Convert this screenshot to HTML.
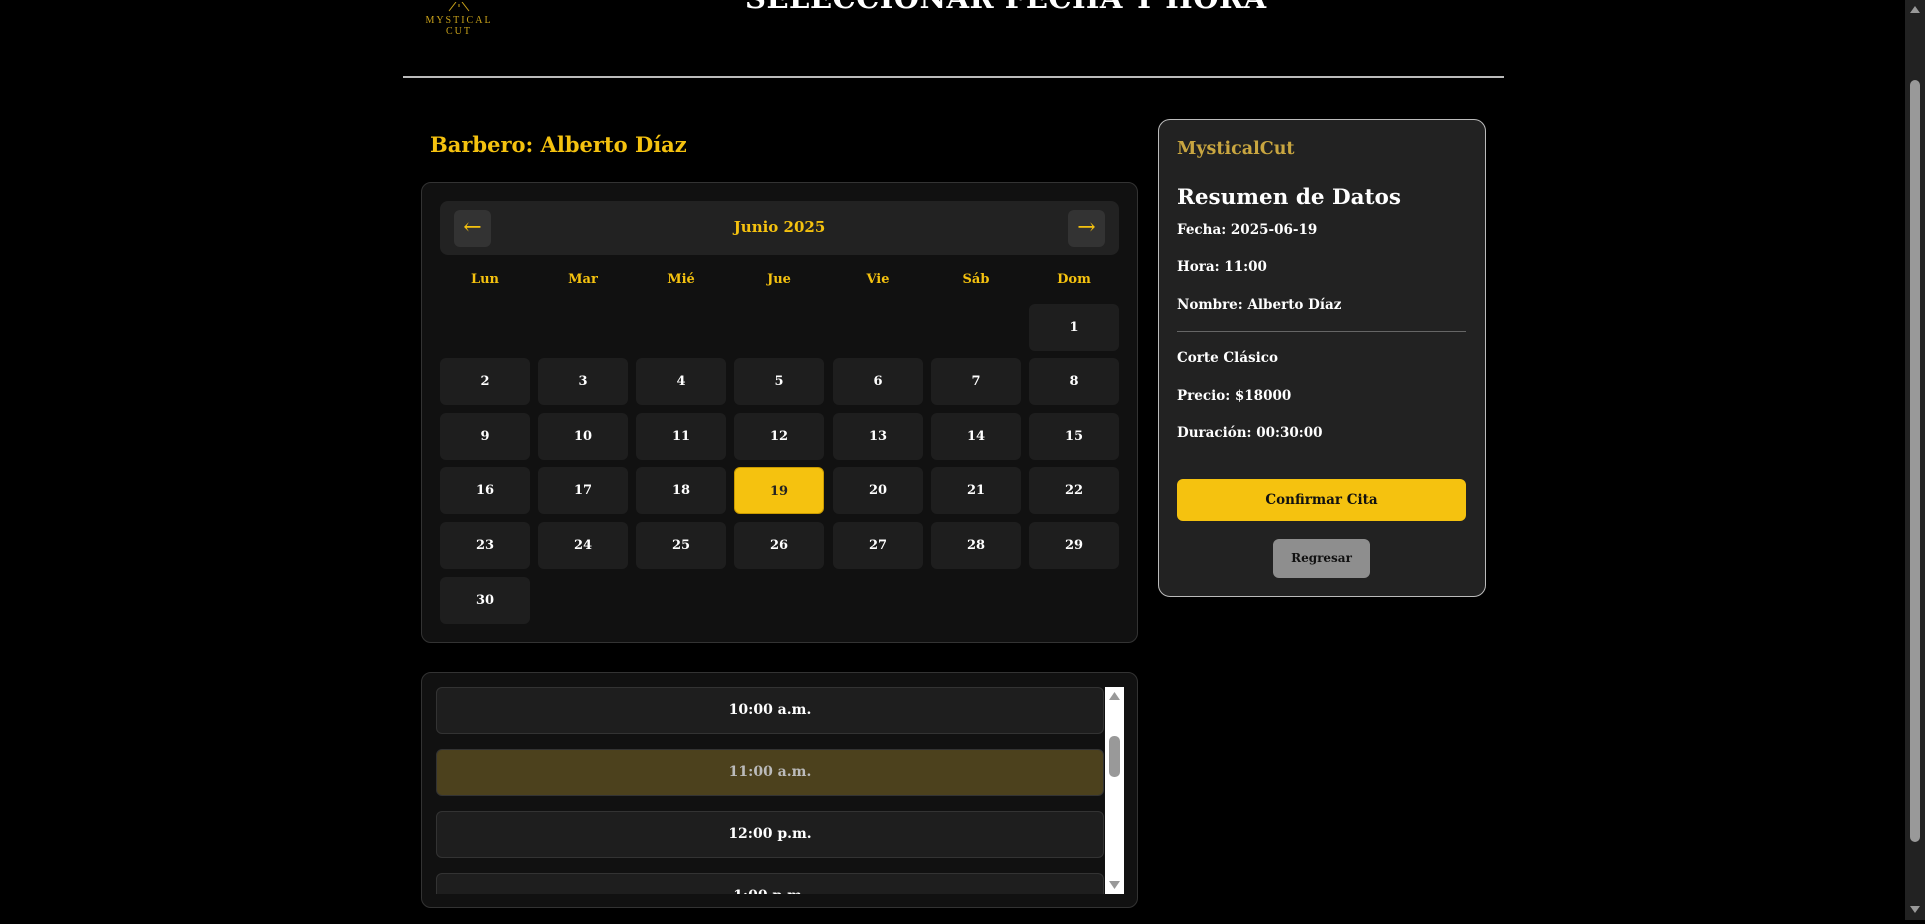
<!DOCTYPE html>
<html><head><meta charset="utf-8"><style>
*{box-sizing:border-box;margin:0;padding:0}
body{width:1925px;height:920px;background:#000;overflow:hidden;position:relative;font-family:"DejaVu Serif","Liberation Serif",serif;font-weight:bold;color:#fff}
.a{position:absolute}
.title{left:745px;top:-19px;width:420px;text-align:center;font-size:29px;letter-spacing:0.5px;white-space:nowrap}
.logo{left:420px;top:2px;width:78px;text-align:center;color:#c9a21a;font-family:"Liberation Serif",serif;font-weight:normal;font-size:10px;letter-spacing:2px;line-height:11px}
.hr{left:403px;top:76px;width:1101px;height:2px;background:#bbb}
.barb{left:430px;top:132px;font-size:21px;color:#f5c20f}
.cal{left:421px;top:182px;width:717px;height:461px;background:#111;border:1px solid #333;border-radius:10px}
.head{left:440px;top:201px;width:679px;height:54px;background:#222;border-radius:8px}
.arr{top:210px;width:37px;height:37px;background:#333;border-radius:6px;color:#f5c20f;font-size:22px;text-align:center;line-height:35px;font-weight:normal}
.month{left:440px;top:218px;width:679px;text-align:center;color:#f5c20f;font-size:15px}
.dn{top:272px;width:90px;text-align:center;color:#f5c20f;font-size:13px}
.c{width:90px;height:47px;background:#1e1e1e;border-radius:6px;text-align:center;line-height:47px;font-size:13px}
.sel{background:#f5c20f;color:#222;border:1px solid #c99a00}
.tb{left:421px;top:672px;width:717px;height:236px;background:#111;border:1px solid #333;border-radius:10px;overflow:hidden}
.s{left:436px;width:668px;height:47px;background:#1e1e1e;border:1px solid #333;border-radius:6px;text-align:center;line-height:45px;font-size:14px}
.sb{left:1105px;top:687px;width:19px;height:207px;background:#fff}
.p{left:1158px;top:119px;width:328px;height:478px;background:#222;border:1px solid #bbb;border-radius:12px}
.t{left:1177px;font-size:13.5px;white-space:nowrap}
</style></head><body>
<div class="a logo"><svg width="40" height="10" viewBox="0 0 40 10"><path d="M10 9 L17 0 M30 9 L23 0 M20 2 V5" stroke="#c9a21a" stroke-width="1"/></svg><br>MYSTICAL<br>CUT</div>
<div class="a title">SELECCIONAR FECHA Y HORA</div>
<div class="a hr"></div>
<div class="a barb">Barbero: Alberto Díaz</div>
<div class="a cal"></div>
<div class="a head"></div>
<div class="a arr" style="left:454px">←</div>
<div class="a month">Junio 2025</div>
<div class="a arr" style="left:1068px">→</div>
<div class="a dn" style="left:440px">Lun</div><div class="a dn" style="left:538px">Mar</div><div class="a dn" style="left:636px">Mié</div><div class="a dn" style="left:734px">Jue</div><div class="a dn" style="left:833px">Vie</div><div class="a dn" style="left:931px">Sáb</div><div class="a dn" style="left:1029px">Dom</div>
<div class="a c" style="left:1029px;top:304px">1</div>
<div class="a c" style="left:440px;top:358px">2</div><div class="a c" style="left:538px;top:358px">3</div><div class="a c" style="left:636px;top:358px">4</div><div class="a c" style="left:734px;top:358px">5</div><div class="a c" style="left:833px;top:358px">6</div><div class="a c" style="left:931px;top:358px">7</div><div class="a c" style="left:1029px;top:358px">8</div>
<div class="a c" style="left:440px;top:413px">9</div><div class="a c" style="left:538px;top:413px">10</div><div class="a c" style="left:636px;top:413px">11</div><div class="a c" style="left:734px;top:413px">12</div><div class="a c" style="left:833px;top:413px">13</div><div class="a c" style="left:931px;top:413px">14</div><div class="a c" style="left:1029px;top:413px">15</div>
<div class="a c" style="left:440px;top:467px">16</div><div class="a c" style="left:538px;top:467px">17</div><div class="a c" style="left:636px;top:467px">18</div><div class="a c sel" style="left:734px;top:467px">19</div><div class="a c" style="left:833px;top:467px">20</div><div class="a c" style="left:931px;top:467px">21</div><div class="a c" style="left:1029px;top:467px">22</div>
<div class="a c" style="left:440px;top:522px">23</div><div class="a c" style="left:538px;top:522px">24</div><div class="a c" style="left:636px;top:522px">25</div><div class="a c" style="left:734px;top:522px">26</div><div class="a c" style="left:833px;top:522px">27</div><div class="a c" style="left:931px;top:522px">28</div><div class="a c" style="left:1029px;top:522px">29</div>
<div class="a c" style="left:440px;top:577px">30</div>
<div class="a tb"></div>
<div class="a s" style="top:687px">10:00 a.m.</div>
<div class="a s" style="top:749px;background:#4c411d;color:#bbb">11:00 a.m.</div>
<div class="a s" style="top:811px">12:00 p.m.</div>
<div class="a s" style="top:873px;height:21px;overflow:hidden;border-bottom:none;border-radius:6px 6px 0 0">1:00 p.m.</div>
<div class="a sb"><svg width="19" height="207"><path d="M4 13 L9.5 5 L15 13Z M4 194 L9.5 202 L15 194Z" fill="#999"/><rect x="4" y="49" width="11" height="41" rx="5" fill="#999"/></svg></div>
<div class="a p"></div>
<div class="a t" style="top:139px;font-size:17.5px;color:#c9a640">MysticalCut</div>
<div class="a t" style="top:185px;font-size:21.5px">Resumen de Datos</div>
<div class="a t" style="top:222px">Fecha: 2025-06-19</div>
<div class="a t" style="top:259px">Hora: 11:00</div>
<div class="a t" style="top:297px">Nombre: Alberto Díaz</div>
<div class="a" style="left:1177px;top:331px;width:289px;height:1px;background:#666"></div>
<div class="a t" style="top:350px">Corte Clásico</div>
<div class="a t" style="top:388px">Precio: $18000</div>
<div class="a t" style="top:425px">Duración: 00:30:00</div>
<div class="a" style="left:1177px;top:479px;width:289px;height:42px;background:#f5c20f;border-radius:6px;color:#111;text-align:center;line-height:42px;font-size:13.5px">Confirmar Cita</div>
<div class="a" style="left:1273px;top:539px;width:97px;height:39px;background:#8e8e8e;border-radius:6px;color:#111;text-align:center;line-height:39px;font-size:12px">Regresar</div>
<div class="a" style="left:1905px;top:0;width:20px;height:920px;background:#222"><svg width="20" height="920"><path d="M5 13 L10 6 L15 13Z M5 906 L10 913 L15 906Z" fill="#999"/><rect x="5" y="80" width="10" height="762" rx="5" fill="#999"/></svg></div>
</body></html>
